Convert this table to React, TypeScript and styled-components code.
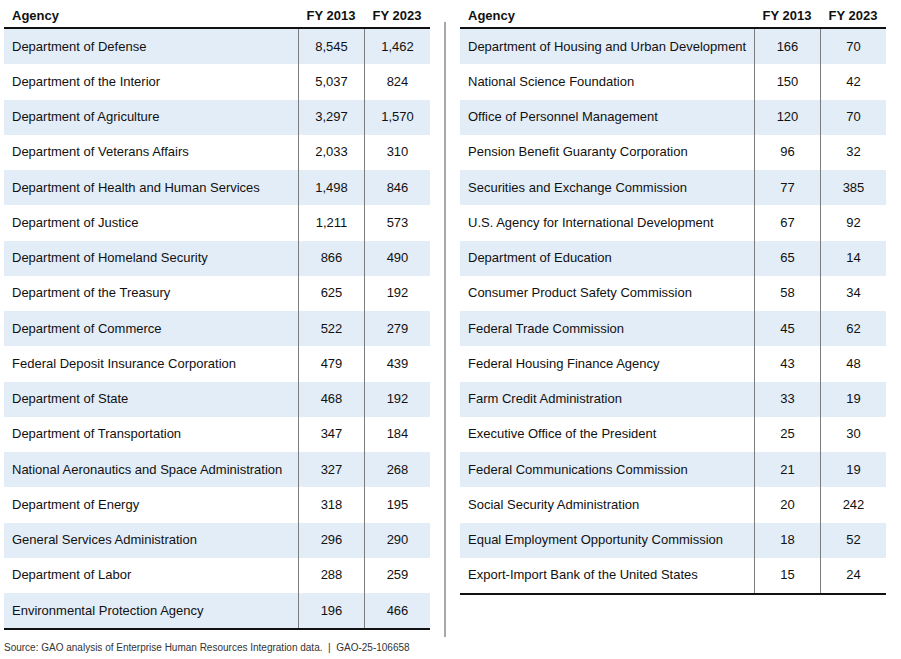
import styled, { createGlobalStyle } from "styled-components";

const GlobalStyle = createGlobalStyle`
    body {
        margin: 0;
        background: #ffffff;
        font-family: "Liberation Sans", Arial, sans-serif;
        color: #111111;
    }
`;

type Row = [string, string, string];

const leftRows: Row[] = [
    ["Department of Defense", "8,545", "1,462"],
    ["Department of the Interior", "5,037", "824"],
    ["Department of Agriculture", "3,297", "1,570"],
    ["Department of Veterans Affairs", "2,033", "310"],
    ["Department of Health and Human Services", "1,498", "846"],
    ["Department of Justice", "1,211", "573"],
    ["Department of Homeland Security", "866", "490"],
    ["Department of the Treasury", "625", "192"],
    ["Department of Commerce", "522", "279"],
    ["Federal Deposit Insurance Corporation", "479", "439"],
    ["Department of State", "468", "192"],
    ["Department of Transportation", "347", "184"],
    ["National Aeronautics and Space Administration", "327", "268"],
    ["Department of Energy", "318", "195"],
    ["General Services Administration", "296", "290"],
    ["Department of Labor", "288", "259"],
    ["Environmental Protection Agency", "196", "466"],
];

const rightRows: Row[] = [
    ["Department of Housing and Urban Development", "166", "70"],
    ["National Science Foundation", "150", "42"],
    ["Office of Personnel Management", "120", "70"],
    ["Pension Benefit Guaranty Corporation", "96", "32"],
    ["Securities and Exchange Commission", "77", "385"],
    ["U.S. Agency for International Development", "67", "92"],
    ["Department of Education", "65", "14"],
    ["Consumer Product Safety Commission", "58", "34"],
    ["Federal Trade Commission", "45", "62"],
    ["Federal Housing Finance Agency", "43", "48"],
    ["Farm Credit Administration", "33", "19"],
    ["Executive Office of the President", "25", "30"],
    ["Federal Communications Commission", "21", "19"],
    ["Social Security Administration", "20", "242"],
    ["Equal Employment Opportunity Commission", "18", "52"],
    ["Export-Import Bank of the United States", "15", "24"],
];

function AgencyTable({ rows }: { rows: Row[] }) {
    return (
        <Table>
            <HeaderRow>
                <HeadCell>Agency</HeadCell>
                <HeadCell $num>FY 2013</HeadCell>
                <HeadCell $num>FY 2023</HeadCell>
            </HeaderRow>
            {rows.map((r, i) => (
                <DataRow key={r[0]} $shaded={i % 2 === 0}>
                    <NameCell>{r[0]}</NameCell>
                    <NumCell>{r[1]}</NumCell>
                    <NumCell>{r[2]}</NumCell>
                </DataRow>
            ))}
        </Table>
    );
}

export default function App() {
    return (
        <Page>
            <GlobalStyle />
            <Tables>
                <AgencyTable rows={leftRows} />
                <Divider />
                <AgencyTable rows={rightRows} />
            </Tables>
            <Source>Source: GAO analysis of Enterprise Human Resources Integration data.&nbsp; |&nbsp; GAO-25-106658</Source>
        </Page>
    );
}

const Page = styled.div`
    width: 901px;
    height: 659px;
    padding-left: 4px;
    box-sizing: border-box;
`;

const Tables = styled.div`
    display: flex;
    align-items: flex-start;
`;

const Table = styled.div`
    width: 426px;
    display: flex;
    flex-direction: column;
    border-bottom: 2px solid #111111;
`;

const Divider = styled.div`
    width: 2px;
    height: 615px;
    margin: 22px 14px 0 14px;
    background: #a8a8a8;
`;

const HeaderRow = styled.div`
    display: grid;
    grid-template-columns: 294px 66px 66px;
    height: 27px;
    border-bottom: 2px solid #111111;
    align-items: center;
`;

const HeadCell = styled.div<{ $num?: boolean }>`
    font-size: 13px;
    font-weight: bold;
    text-align: ${(p) => (p.$num ? "center" : "left")};
    padding-left: ${(p) => (p.$num ? "0" : "8px")};
    padding-top: 4px;
`;

const DataRow = styled.div<{ $shaded: boolean }>`
    display: grid;
    grid-template-columns: 294px 66px 66px;
    height: 35.25px;
    background: ${(p) => (p.$shaded ? "#e3edf8" : "#ffffff")};
`;

const NameCell = styled.div`
    display: flex;
    align-items: center;
    padding-left: 8px;
    padding-bottom: 1px;
    font-size: 13px;
    white-space: nowrap;
`;

const NumCell = styled.div`
    display: flex;
    align-items: center;
    justify-content: center;
    padding-bottom: 1px;
    font-size: 13px;
    border-left: 1px solid #7c7c7c;
`;

const Source = styled.div`
    margin-top: 5px;
    font-size: 10px;
    color: #333333;
`;
